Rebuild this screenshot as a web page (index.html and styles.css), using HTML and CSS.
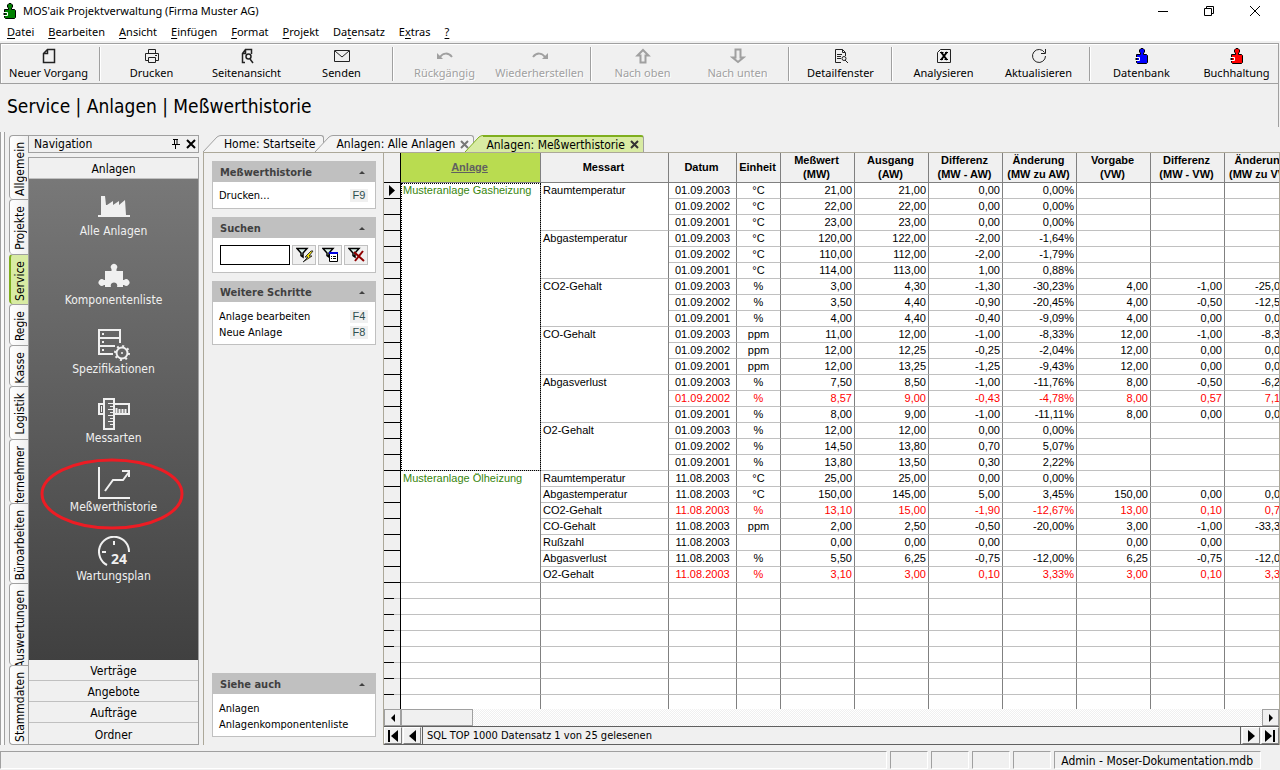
FILE: index.html
```html
<!DOCTYPE html>
<html lang="de">
<head>
    <meta charset="utf-8">
    <title>MOS'aik Projektverwaltung (Firma Muster AG)</title>
    <link rel="stylesheet" href="styles.css">
</head>
<body>
    <!-- shared puzzle piece, filled with the current colour -->
    <svg class="defs" aria-hidden="true">
        <symbol id="puzzle" viewBox="0 0 14 16">
            <path d="M1.500 6.500H5.500V5L4.500 4V2L6 .5H8L9.500 2V4L8.500 5V6.500H11.500L12.500 7.500V14.500L11.500 15.500H2.500L1.500 14.500Z" fill="currentColor" stroke="#000"/>
            <path d="M1 9.500H4.500V12.500H1" fill="none" stroke="#fff"/>
            <path d="M0 11H3" stroke="#000"/>
        </symbol>
    </svg>

    <header class="titlebar">
        <svg class="app-icon" width="14" height="16"><use href="#puzzle"/></svg>
        <span class="app-title">MOS'aik Projektverwaltung (Firma Muster AG)</span>
        <div class="window-buttons">
            <button aria-label="Minimieren"><svg width="12" height="12"><path d="M1 6.500H11" stroke="#000"/></svg></button>
            <button aria-label="Verkleinern"><svg width="12" height="12"><path d="M1.500 3.500H8.500V10.500H1.500ZM3.500 3V1.500H10.500V8.500H9" fill="none" stroke="#000"/></svg></button>
            <button aria-label="Schließen"><svg width="12" height="12"><path d="M1 1L11 11M11 1L1 11" stroke="#000"/></svg></button>
        </div>
    </header>

    <nav class="menubar">
        <button><u>D</u>atei</button>
        <button><u>B</u>earbeiten</button>
        <button><u>A</u>nsicht</button>
        <button><u>E</u>infügen</button>
        <button><u>F</u>ormat</button>
        <button><u>P</u>rojekt</button>
        <button>Da<u>t</u>ensatz</button>
        <button>E<u>x</u>tras</button>
        <button><u>?</u></button>
    </nav>

    <div class="toolbar">
        <button><svg width="16" height="16"><path d="M6.500 1.500H13.500V14.500H2.500V5.500ZM6.500 1.500V5.500H2.500" fill="none" stroke="#222" stroke-width="1.500"/></svg>Neuer Vorgang</button>
        <span class="sep"></span>
        <button><svg width="16" height="16"><path d="M4.500 5.500V1.500H11.500V5.500M4.500 12.500H1.500V5.500H14.500V12.500H11.500M4.500 9.500H11.500V14.500H4.500ZM11 7.500H13" fill="none" stroke="#222"/></svg>Drucken</button>
        <button><svg width="16" height="16"><path d="M6 14.500H3.500V5.500L6.500 1.500H12.500V6M6.500 2V5.500H4M11 11L14 15" fill="none" stroke="#222" stroke-width="1.500"/><circle cx="9.500" cy="8.500" r="2.500" fill="none" stroke="#222" stroke-width="1.500"/></svg>Seitenansicht</button>
        <button><svg width="16" height="16"><path d="M.5 2.500H15.500V13.500H.5ZM1 3L8 9L15 3" fill="none" stroke="#222"/></svg>Senden</button>
        <span class="sep"></span>
        <button disabled><svg width="18" height="16"><path d="M4 9C7 5 12 4 16 9" fill="none" stroke="#a0a0a0" stroke-width="2"/><path d="M1 5V11H7Z" fill="#a0a0a0"/></svg>Rückgängig</button>
        <button disabled><svg width="18" height="16"><path d="M2 9C6 4 11 5 14 9" fill="none" stroke="#a0a0a0" stroke-width="2"/><path d="M17 5V11H11Z" fill="#a0a0a0"/></svg>Wiederherstellen</button>
        <span class="sep"></span>
        <button disabled><svg width="16" height="16"><path d="M8 2L13.500 7.500H10.500V14.500H5.500V7.500H2.500Z" fill="#eee" stroke="#a0a0a0" stroke-width="2"/></svg>Nach oben</button>
        <button disabled><svg width="16" height="16"><path d="M8 14L13.500 9.500H10.500V1.500H5.500V9.500H2.500Z" fill="#eee" stroke="#a0a0a0" stroke-width="2"/></svg>Nach unten</button>
        <span class="sep"></span>
        <button><svg width="16" height="16"><path d="M8 14.500H2.500V1.500H9.500L12.500 4.500V8M9.500 1.500V4.500H12M4 6.500H9M4 8.500H8M4 10.500H8M12 12L15 15" fill="none" stroke="#222"/><circle cx="11" cy="10.500" r="2" fill="none" stroke="#222"/></svg>Detailfenster</button>
        <span class="sep"></span>
        <button><svg width="16" height="16"><path d="M4.500 1.500H14.500V14.500H1.500V4.500Z" fill="none" stroke="#222"/><path d="M5 4L11 12M11 4L5 12" stroke="#000" stroke-width="2"/><path d="M4 4.500H7.500M9 4.500H12M4 11.500H7M8.500 11.500H12" stroke="#000"/></svg>Analysieren</button>
        <button><svg width="16" height="16"><path d="M13.500 4.500A6.500 6.500 0 1 0 14.500 8M14.500 1V5.500H10" fill="none" stroke="#222"/></svg>Aktualisieren</button>
        <span class="sep"></span>
        <button><svg class="blue" width="14" height="16"><use href="#puzzle"/></svg>Datenbank</button>
        <button><svg class="red" width="14" height="16"><use href="#puzzle"/></svg>Buchhaltung</button>
    </div>

    <h1>Service | Anlagen | Meßwerthistorie</h1>

    <main>
        <div class="dock-edge"></div>

        <div class="side-tabs">
            <button><span>Allgemein</span></button>
            <button><span>Projekte</span></button>
            <button class="active"><span>Service</span></button>
            <button><span>Regie</span></button>
            <button><span>Kasse</span></button>
            <button><span>Logistik</span></button>
            <button><span>Unternehmer</span></button>
            <button><span>Büroarbeiten</span></button>
            <button><span>Auswertungen</span></button>
            <button><span>Stammdaten</span></button>
        </div>

        <aside class="navigation">
            <div class="nav-title">
                <span>Navigation</span>
                <button aria-label="Anheften"><svg width="10" height="10"><path d="M3.500 0V5.500M2 .5H7M6 0V5.500M1 5.500H9M4.500 5V10" fill="none" stroke="#000"/></svg></button>
                <button aria-label="Schließen"><svg width="10" height="10"><path d="M1 1L9 9M9 1L1 9" stroke="#000" stroke-width="2"/></svg></button>
            </div>
            <div class="nav-body">
                <button class="section">Anlagen</button>
                <div class="nav-items">
                    <a href="#"><svg width="32" height="32"><path d="M3 24V5H7L8 14H9L15 10V14L21 10V14L27 9L28 24Z" fill="#f0f0f0"/><path d="M0 25H32" stroke="#f0f0f0" stroke-width="2"/></svg>Alle Anlagen</a>
                    <a href="#"><svg width="32" height="32"><path d="M7 11H13.500V9A3.200 3.200 0 1 1 18.500 9V11H25V20H26A3.300 3.300 0 1 1 26 25H25V27H19C21 21 11 21 13 27H7V25H6A3.300 3.300 0 1 1 6 20H7Z" fill="#f0f0f0"/></svg>Komponentenliste</a>
                    <a href="#"><svg width="32" height="32"><path d="M22 14V1H1V25H15M1 9H22M1 17H17" fill="none" stroke="#f0f0f0" stroke-width="2"/><path d="M4 5H6M4 13H6M4 21H6" stroke="#f0f0f0" stroke-width="2"/><circle cx="24" cy="24" r="5.500" fill="none" stroke="#f0f0f0" stroke-width="2"/><circle cx="24" cy="24" r="7" fill="none" stroke="#f0f0f0" stroke-width="2" stroke-dasharray="2 3.500"/><circle cx="24" cy="24" r="1" fill="#f0f0f0"/></svg>Spezifikationen</a>
                    <a href="#"><svg width="32" height="32"><path d="M6 6H1V16H6M16 6H31V16H16M18.500 16V10M21.500 16V11M24.500 16V11M27.500 16V11" fill="none" stroke="#f0f0f0" stroke-width="2"/><path d="M6 1H16V31H6Z" fill="#666" stroke="#f0f0f0" stroke-width="2"/><path d="M10 5.500H15M12 8.500H15M10 11.500H15M12 14.500H15M10 17.500H15M12 20.500H15M10 23.500H15M12 26.500H15" stroke="#f0f0f0"/><path d="M3.500 8V14" stroke="#f0f0f0"/></svg>Messarten</a>
                    <a href="#"><svg width="32" height="32"><path d="M1 0V31H32M7 24L15 13H25L31 5M24 4H31V10" fill="none" stroke="#f0f0f0" stroke-width="2"/></svg>Meßwerthistorie
                        <svg class="marker" width="144" height="72"><ellipse cx="72" cy="36" rx="70" ry="34" fill="none" stroke="#ed1c24" stroke-width="3"/></svg></a>
                    <a href="#"><svg width="32" height="32"><path d="M9 29A15 15 0 1 1 31 16" fill="none" stroke="#f0f0f0" stroke-width="2"/><path d="M16 5V9M4 16H8" stroke="#f0f0f0" stroke-width="2"/><text x="13" y="28" class="icon-text">24</text></svg>Wartungsplan</a>
                </div>
                <button class="section">Verträge</button>
                <button class="section">Angebote</button>
                <button class="section">Aufträge</button>
                <button class="section">Ordner</button>
            </div>
        </aside>

        <section class="document">
            <div class="doc-tabs">
                <div class="doc-tab">
                    <svg width="18" height="17"><path d="M0 17L14 2Q16 .5 18 .5V17Z" fill="#f4f4f4"/><path d="M0 17L14 2Q16 .5 18 .5" fill="none" stroke="#a0a0a0"/></svg>
                    <button class="label">Home: Startseite</button>
                </div>
                <div class="doc-tab">
                    <svg width="18" height="17"><path d="M0 17L14 2Q16 .5 18 .5V17Z" fill="#f4f4f4"/><path d="M0 17L14 2Q16 .5 18 .5" fill="none" stroke="#a0a0a0"/></svg>
                    <button class="label">Anlagen: Alle Anlagen</button>
                    <button class="close" aria-label="Tab schließen"><svg width="9" height="9"><path d="M1 1L8 8M8 1L1 8" stroke="#777" stroke-width="2"/></svg></button>
                </div>
                <div class="doc-tab active">
                    <svg width="18" height="17"><path d="M0 17L14 2Q16 .5 18 .5V17Z" fill="#d8eba3"/><path d="M0 17L14 2Q16 .5 18 .5" fill="none" stroke="#7fae1e"/></svg>
                    <button class="label">Anlagen: Meßwerthistorie</button>
                    <button class="close" aria-label="Tab schließen"><svg width="9" height="9"><path d="M1 1L8 8M8 1L1 8" stroke="#333" stroke-width="2"/></svg></button>
                </div>
            </div>

            <div class="doc-body">
                <div class="tasks">
                    <section class="panel">
                        <h2>Meßwerthistorie <i></i></h2>
                        <div class="links"><a href="#">Drucken...<kbd>F9</kbd></a></div>
                    </section>
                    <section class="panel">
                        <h2>Suchen <i></i></h2>
                        <div class="search">
                            <input type="text" aria-label="Suchen">
                            <button aria-label="Filter anwenden"><svg width="18" height="16"><path d="M1 1.500H11L7 6V10L5 8.500V6Z" fill="#d8efe8" stroke="#000" stroke-width="1.500"/><path d="M15 4L9 10H12L7 15L16 9H13L17 4Z" fill="#ffee00" stroke="#333"/></svg></button>
                            <button aria-label="Filter bearbeiten"><svg width="18" height="16"><path d="M1 1.500H11L7 6V10L5 8.500V6Z" fill="#d8efe8" stroke="#000" stroke-width="1.500"/><path d="M7.500 5.500H15.500V14.500H7.500Z" fill="#fff" stroke="#000"/><path d="M7 6H16" stroke="#0000e0" stroke-width="2"/><path d="M9 9.500H10M11 9.500H14M9 11.500H10M11 11.500H14" stroke="#000"/></svg></button>
                            <button aria-label="Filter entfernen"><svg width="18" height="16"><path d="M1 1.500H11L7 6V10L5 8.500V6Z" fill="#d8efe8" stroke="#000" stroke-width="1.500"/><path d="M6 5L16 14M15 4L7 14" stroke="#900000" stroke-width="2"/></svg></button>
                        </div>
                    </section>
                    <section class="panel">
                        <h2>Weitere Schritte <i></i></h2>
                        <div class="links">
                            <a href="#">Anlage bearbeiten<kbd>F4</kbd></a>
                            <a href="#">Neue Anlage<kbd>F8</kbd></a>
                        </div>
                    </section>
                    <section class="panel last">
                        <h2>Siehe auch <i></i></h2>
                        <div class="links">
                            <a href="#">Anlagen</a>
                            <a href="#">Anlagenkomponentenliste</a>
                        </div>
                    </section>
                </div>

                <div class="grid">
                    <div class="grid-view">
                        <table>
                            <colgroup>
                                <col class="c-select"><col class="c-anlage"><col class="c-messart"><col class="c-datum"><col class="c-einheit">
                                <col class="c-wert" span="7">
                            </colgroup>
                            <thead>
                                <tr><th class="sel"></th><th class="sorted">Anlage</th><th>Messart</th><th>Datum</th><th>Einheit</th><th>Meßwert<br>(MW)</th><th>Ausgang<br>(AW)</th><th>Differenz<br>(MW - AW)</th><th>Änderung<br>(MW zu AW)</th><th>Vorgabe<br>(VW)</th><th>Differenz<br>(MW - VW)</th><th>Änderung<br>(MW zu VW)</th></tr>
                            </thead>
                            <tbody>
                                <tr><td class="sel"><svg width="6" height="11"><path d="M0 0L6 5.500L0 11Z"/></svg></td><td class="anlage current" rowspan="18">Musteranlage Gasheizung</td><td class="art" rowspan="3">Raumtemperatur</td><td class="mid">01.09.2003</td><td class="mid">°C</td><td>21,00</td><td>21,00</td><td>0,00</td><td>0,00%</td><td></td><td></td><td></td></tr>
                                <tr><td class="sel"></td><td class="mid">01.09.2002</td><td class="mid">°C</td><td>22,00</td><td>22,00</td><td>0,00</td><td>0,00%</td><td></td><td></td><td></td></tr>
                                <tr><td class="sel"></td><td class="mid">01.09.2001</td><td class="mid">°C</td><td>23,00</td><td>23,00</td><td>0,00</td><td>0,00%</td><td></td><td></td><td></td></tr>
                                <tr><td class="sel"></td><td class="art" rowspan="3">Abgastemperatur</td><td class="mid">01.09.2003</td><td class="mid">°C</td><td>120,00</td><td>122,00</td><td>-2,00</td><td>-1,64%</td><td></td><td></td><td></td></tr>
                                <tr><td class="sel"></td><td class="mid">01.09.2002</td><td class="mid">°C</td><td>110,00</td><td>112,00</td><td>-2,00</td><td>-1,79%</td><td></td><td></td><td></td></tr>
                                <tr><td class="sel"></td><td class="mid">01.09.2001</td><td class="mid">°C</td><td>114,00</td><td>113,00</td><td>1,00</td><td>0,88%</td><td></td><td></td><td></td></tr>
                                <tr><td class="sel"></td><td class="art" rowspan="3">CO2-Gehalt</td><td class="mid">01.09.2003</td><td class="mid">%</td><td>3,00</td><td>4,30</td><td>-1,30</td><td>-30,23%</td><td>4,00</td><td>-1,00</td><td>-25,00%</td></tr>
                                <tr><td class="sel"></td><td class="mid">01.09.2002</td><td class="mid">%</td><td>3,50</td><td>4,40</td><td>-0,90</td><td>-20,45%</td><td>4,00</td><td>-0,50</td><td>-12,50%</td></tr>
                                <tr><td class="sel"></td><td class="mid">01.09.2001</td><td class="mid">%</td><td>4,00</td><td>4,40</td><td>-0,40</td><td>-9,09%</td><td>4,00</td><td>0,00</td><td>0,00%</td></tr>
                                <tr><td class="sel"></td><td class="art" rowspan="3">CO-Gehalt</td><td class="mid">01.09.2003</td><td class="mid">ppm</td><td>11,00</td><td>12,00</td><td>-1,00</td><td>-8,33%</td><td>12,00</td><td>-1,00</td><td>-8,33%</td></tr>
                                <tr><td class="sel"></td><td class="mid">01.09.2002</td><td class="mid">ppm</td><td>12,00</td><td>12,25</td><td>-0,25</td><td>-2,04%</td><td>12,00</td><td>0,00</td><td>0,00%</td></tr>
                                <tr><td class="sel"></td><td class="mid">01.09.2001</td><td class="mid">ppm</td><td>12,00</td><td>13,25</td><td>-1,25</td><td>-9,43%</td><td>12,00</td><td>0,00</td><td>0,00%</td></tr>
                                <tr><td class="sel"></td><td class="art" rowspan="3">Abgasverlust</td><td class="mid">01.09.2003</td><td class="mid">%</td><td>7,50</td><td>8,50</td><td>-1,00</td><td>-11,76%</td><td>8,00</td><td>-0,50</td><td>-6,25%</td></tr>
                                <tr class="alert"><td class="sel"></td><td class="mid">01.09.2002</td><td class="mid">%</td><td>8,57</td><td>9,00</td><td>-0,43</td><td>-4,78%</td><td>8,00</td><td>0,57</td><td>7,13%</td></tr>
                                <tr><td class="sel"></td><td class="mid">01.09.2001</td><td class="mid">%</td><td>8,00</td><td>9,00</td><td>-1,00</td><td>-11,11%</td><td>8,00</td><td>0,00</td><td>0,00%</td></tr>
                                <tr><td class="sel"></td><td class="art" rowspan="3">O2-Gehalt</td><td class="mid">01.09.2003</td><td class="mid">%</td><td>12,00</td><td>12,00</td><td>0,00</td><td>0,00%</td><td></td><td></td><td></td></tr>
                                <tr><td class="sel"></td><td class="mid">01.09.2002</td><td class="mid">%</td><td>14,50</td><td>13,80</td><td>0,70</td><td>5,07%</td><td></td><td></td><td></td></tr>
                                <tr><td class="sel"></td><td class="mid">01.09.2001</td><td class="mid">%</td><td>13,80</td><td>13,50</td><td>0,30</td><td>2,22%</td><td></td><td></td><td></td></tr>
                                <tr><td class="sel"></td><td class="anlage" rowspan="7">Musteranlage Ölheizung</td><td class="art">Raumtemperatur</td><td class="mid">11.08.2003</td><td class="mid">°C</td><td>25,00</td><td>25,00</td><td>0,00</td><td>0,00%</td><td></td><td></td><td></td></tr>
                                <tr><td class="sel"></td><td class="art">Abgastemperatur</td><td class="mid">11.08.2003</td><td class="mid">°C</td><td>150,00</td><td>145,00</td><td>5,00</td><td>3,45%</td><td>150,00</td><td>0,00</td><td>0,00%</td></tr>
                                <tr class="alert"><td class="sel"></td><td class="art">CO2-Gehalt</td><td class="mid">11.08.2003</td><td class="mid">%</td><td>13,10</td><td>15,00</td><td>-1,90</td><td>-12,67%</td><td>13,00</td><td>0,10</td><td>0,77%</td></tr>
                                <tr><td class="sel"></td><td class="art">CO-Gehalt</td><td class="mid">11.08.2003</td><td class="mid">ppm</td><td>2,00</td><td>2,50</td><td>-0,50</td><td>-20,00%</td><td>3,00</td><td>-1,00</td><td>-33,33%</td></tr>
                                <tr><td class="sel"></td><td class="art">Rußzahl</td><td class="mid">11.08.2003</td><td class="mid"></td><td>0,00</td><td>0,00</td><td>0,00</td><td></td><td>0,00</td><td>0,00</td><td></td></tr>
                                <tr><td class="sel"></td><td class="art">Abgasverlust</td><td class="mid">11.08.2003</td><td class="mid">%</td><td>5,50</td><td>6,25</td><td>-0,75</td><td>-12,00%</td><td>6,25</td><td>-0,75</td><td>-12,00%</td></tr>
                                <tr class="alert"><td class="sel"></td><td class="art">O2-Gehalt</td><td class="mid">11.08.2003</td><td class="mid">%</td><td>3,10</td><td>3,00</td><td>0,10</td><td>3,33%</td><td>3,00</td><td>0,10</td><td>3,33%</td></tr>
                            </tbody>
                            <tbody class="empty">
                                <tr><td class="sel"></td><td></td><td></td><td></td><td></td><td></td><td></td><td></td><td></td><td></td><td></td><td></td></tr>
                                <tr><td class="sel"></td><td></td><td></td><td></td><td></td><td></td><td></td><td></td><td></td><td></td><td></td><td></td></tr>
                                <tr><td class="sel"></td><td></td><td></td><td></td><td></td><td></td><td></td><td></td><td></td><td></td><td></td><td></td></tr>
                                <tr><td class="sel"></td><td></td><td></td><td></td><td></td><td></td><td></td><td></td><td></td><td></td><td></td><td></td></tr>
                                <tr><td class="sel"></td><td></td><td></td><td></td><td></td><td></td><td></td><td></td><td></td><td></td><td></td><td></td></tr>
                                <tr><td class="sel"></td><td></td><td></td><td></td><td></td><td></td><td></td><td></td><td></td><td></td><td></td><td></td></tr>
                                <tr><td class="sel"></td><td></td><td></td><td></td><td></td><td></td><td></td><td></td><td></td><td></td><td></td><td></td></tr>
                                <tr><td class="sel"></td><td></td><td></td><td></td><td></td><td></td><td></td><td></td><td></td><td></td><td></td><td></td></tr>
                            </tbody>
                        </table>
                    </div>
                    <div class="scrollbar">
                        <button aria-label="Nach links"><svg width="4" height="8"><path d="M4 0V8L0 4Z"/></svg></button>
                        <div class="thumb"></div>
                        <button class="right" aria-label="Nach rechts"><svg width="4" height="8"><path d="M0 0V8L4 4Z"/></svg></button>
                    </div>
                    <div class="record-nav">
                        <button aria-label="Erster Datensatz"><svg width="10" height="12"><path d="M1 0V12" stroke="#000" stroke-width="2"/><path d="M10 0V12L3 6Z"/></svg></button>
                        <button aria-label="Voriger Datensatz"><svg width="7" height="12"><path d="M7 0V12L0 6Z"/></svg></button>
                        <span class="record-info">SQL TOP 1000 Datensatz 1 von 25 gelesenen</span>
                        <button aria-label="Nächster Datensatz"><svg width="7" height="12"><path d="M0 0V12L7 6Z"/></svg></button>
                        <button aria-label="Letzter Datensatz"><svg width="10" height="12"><path d="M9 0V12" stroke="#000" stroke-width="2"/><path d="M0 0V12L7 6Z"/></svg></button>
                    </div>
                </div>
            </div>
        </section>
    </main>

    <footer class="statusbar">
        <span class="wide"></span>
        <span></span>
        <span></span>
        <span></span>
        <span></span>
        <span class="db">Admin - Moser-Dokumentation.mdb</span>
    </footer>
</body>
</html>
```
FILE: styles.css
```css
* {
    box-sizing: border-box;
}
body {
    margin: 0;
    height: 100vh;
    display: flex;
    flex-direction: column;
    overflow: hidden;
    background-color: #f0f0f0;
    color: #000;
    font-family: "DejaVu Sans Condensed", "DejaVu Sans", sans-serif;
    font-size: 12px;
    line-height: 16px;
}
button {
    margin: 0;
    padding: 0;
    border: 0;
    background: none;
    color: inherit;
    font: inherit;
}
a {
    color: inherit;
    text-decoration: none;
}
svg {
    display: block;
    flex: none;
}
.defs {
    position: absolute;
    width: 0;
    height: 0;
}

/* title and menu */
.titlebar,
.menubar,
.toolbar {
    display: flex;
    font-family: "Noto Sans", sans-serif;
    font-size: 11px;
}
.titlebar {
    align-items: center;
    height: 23px;
    padding: 0 19px 1px 3px;
    background-color: #fff;
}
.app-icon {
    color: #008000;
}
.app-title {
    flex: 1;
    padding-left: 6px;
}
.window-buttons {
    display: flex;
    gap: 34px;
}
.menubar {
    gap: 14px;
    height: 18px;
    padding: 0 7px;
    background-color: #fff;
}
.menubar button {
    line-height: 18px;
}
.menubar u {
    text-underline-offset: 2px;
}

/* toolbar */
.toolbar {
    height: 41px;
    margin: 2px 1px 0 0;
    padding: 3px 0 0;
    border: 1px solid #a0a0a0;
    box-shadow: inset 1px 1px 0 #fff;
    overflow: hidden;
}
.toolbar button {
    flex: 0 0 95px;
    display: flex;
    flex-direction: column;
    align-items: center;
    justify-content: flex-start;
    gap: 1px;
    padding-top: 1px;
    white-space: nowrap;
}
.toolbar button:disabled {
    color: #a0a0a0;
    text-shadow: 1px 1px 0 #fff;
}
.toolbar .sep {
    flex: 0 0 8px;
    height: 34px;
    background: linear-gradient(to right, transparent 3px, #a0a0a0 3px, #a0a0a0 4px, #fff 4px, #fff 5px, transparent 5px);
}
.blue {
    color: #0000ff;
}
.red {
    color: #ff0000;
}
h1 {
    height: 43px;
    margin: 0 1px 5px 0;
    padding: 0 7px;
    border-right: 1px solid #a0a0a0;
    font-size: 19px;
    font-weight: normal;
    line-height: 44px;
}

/* main area */
main {
    flex: 1;
    display: flex;
    min-height: 0;
    padding-top: 3px;
}
.dock-edge {
    width: 5px;
    margin: -3px 4px 0 0;
    border-left: 1px solid #a0a0a0;
    border-right: 1px solid #a0a0a0;
    background-color: #fafafa;
}
.side-tabs {
    display: grid;
    grid-template-rows: 64px 55px 50px 41px 41px 53px 64px 80px 82px 1fr;
    width: 19px;
}
.side-tabs button {
    display: flex;
    align-items: flex-start;
    justify-content: flex-end;
    min-height: 0;
    padding-top: 6px;
    border: 1px solid #a0a0a0;
    border-width: 1px 0 0 1px;
    border-radius: 4px 0 0 4px;
    background: linear-gradient(to right, #fff, #f0f0f0);
    overflow: hidden;
}
.side-tabs button:last-child {
    border-bottom-width: 1px;
}
.side-tabs .active {
    border-left: 2px solid #7fae1e;
    background: #d8eba3;
}
.side-tabs span {
    writing-mode: vertical-rl;
    transform: rotate(180deg);
    white-space: nowrap;
}
.navigation {
    display: flex;
    flex-direction: column;
    gap: 4px;
    width: 171px;
}
.nav-title {
    display: flex;
    align-items: center;
    gap: 5px;
    height: 18px;
    padding: 0 2px 0 5px;
    border: 1px solid #a0a0a0;
}
.nav-title span {
    flex: 1;
}
.nav-body {
    flex: 1;
    display: flex;
    flex-direction: column;
    border: 1px solid #a0a0a0;
}
.section {
    height: 21px;
    padding-top: 2px;
    border-bottom: 1px solid #c0c0c0;
}
.section:last-child {
    border-bottom: 0;
}
.nav-items {
    flex: 1;
    display: flex;
    flex-direction: column;
    gap: 21px;
    padding-top: 12px;
    background: linear-gradient(#787878, #404040);
    color: #f0f0f0;
}
.nav-items a {
    position: relative;
    display: flex;
    flex-direction: column;
    align-items: center;
}
.icon-text {
    fill: #f0f0f0;
    font: bold 14px "Open Sans", sans-serif;
}
.marker {
    position: absolute;
    top: -9px;
    left: 11px;
}

/* document tabs */
.document {
    flex: 1;
    display: flex;
    flex-direction: column;
    min-width: 0;
    margin-left: 4px;
}
.doc-tabs {
    display: flex;
    height: 17px;
}
.doc-tab {
    display: flex;
}
.doc-tab + .doc-tab {
    margin-left: -9px;
}
.doc-tab .label {
    padding: 0 5px 0 3px;
    border-top: 1px solid #a0a0a0;
    background-color: #f4f4f4;
}
.doc-tab .label:last-child,
.doc-tab .close {
    border-right: 1px solid #a0a0a0;
    border-top-right-radius: 3px;
}
.doc-tab .label:last-child {
    padding-right: 8px;
}
.doc-tab .close {
    padding: 0 4px 0 0;
    border-top: 1px solid #a0a0a0;
    background-color: #f4f4f4;
}
.doc-tab.active .label,
.doc-tab.active .close {
    border-top: 2px solid #7fae1e;
    background-color: #d8eba3;
    line-height: 14px;
}
.doc-body {
    flex: 1;
    display: flex;
    min-height: 0;
    border: 1px solid #aca899;
    border-bottom: 0;
}

/* task panels */
.tasks {
    display: flex;
    flex-direction: column;
    gap: 8px;
    width: 179px;
    padding: 8px 7px 8px 8px;
    font-size: 11px;
}
.panel {
    border: 1px solid #c0c0c0;
    background-color: #fff;
}
.panel.last {
    margin-top: auto;
}
.panel h2 {
    display: flex;
    align-items: center;
    justify-content: space-between;
    height: 20px;
    margin: 0;
    padding: 1px 10px 0 7px;
    background-color: #c0c0c0;
    color: #404040;
    font-size: 11px;
}
.panel h2 i {
    border: 3px solid transparent;
    border-top: 0;
    border-bottom-color: #404040;
}
.links {
    padding: 6px 7px 4px 6px;
}
.panel:not(:first-child) .links {
    padding: 7px 7px 3px 6px;
}
.links a {
    display: flex;
    justify-content: space-between;
    height: 16px;
}
.links kbd {
    width: 18px;
    height: 13px;
    margin-top: 1px;
    background-color: #f0f0f0;
    color: #2f4f4f;
    font: 11px/13px "Liberation Sans", Arial, sans-serif;
    text-align: center;
}
.search {
    display: flex;
    gap: 2px;
    padding: 7px;
}
.search input {
    flex: 1;
    min-width: 0;
    height: 20px;
    border: 1px solid #000;
    border-radius: 0;
}
.search button {
    width: 24px;
    height: 20px;
    padding: 1px 3px;
    border: 1px solid #c0c0c0;
    background-color: #f0f0f0;
}

/* data grid */
.grid {
    flex: 1;
    display: flex;
    flex-direction: column;
    min-width: 0;
    border-left: 1px solid #aca899;
}
.grid-view {
    flex: 1;
    min-height: 0;
    overflow: hidden;
    background-color: #fff;
}
table {
    width: 915px;
    table-layout: fixed;
    border-spacing: 0;
    font: 11px/15px "Liberation Sans", Arial, sans-serif;
}
.c-select { width: 17px; }
.c-anlage { width: 140px; }
.c-messart { width: 128px; }
.c-datum { width: 68px; }
.c-einheit { width: 44px; }
.c-wert { width: 74px; }
th {
    height: 30px;
    padding: 0 2px 1px 0;
    border-right: 1px solid #808080;
    border-bottom: 1px solid #808080;
    background-color: #f0f0f0;
    line-height: 14px;
    white-space: nowrap;
}
th.sorted {
    background-color: #b9dc50;
    color: #606060;
    text-decoration: underline;
}
td {
    height: 16px;
    padding: 0 2px;
    border-right: 1px solid #808080;
    border-bottom: 1px solid #c0c0c0;
    text-align: right;
    vertical-align: top;
    white-space: nowrap;
}
td.mid {
    text-align: center;
}
td.art,
td.anlage {
    text-align: left;
}
td.anlage {
    color: #38850d;
}
td.current {
    outline: 1px dotted #000;
    outline-offset: -1px;
}
.alert td {
    color: #ff0000;
}
.alert .art {
    color: #000;
}
.sel,
.alert .sel {
    padding: 2px 0 0 5px;
    border-color: #000;
    background-color: #f0f0f0;
}
.empty .sel {
    border-bottom: 0;
    background: linear-gradient(to right, #000 10px, #c0c0c0 10px) bottom / 100% 1px no-repeat #f0f0f0;
}
.scrollbar {
    display: flex;
    height: 17px;
    background: repeating-conic-gradient(#fff 0 25%, #f0f0f0 0 50%) 0 0 / 2px 2px;
}
.scrollbar button,
.thumb {
    display: flex;
    align-items: center;
    justify-content: center;
    width: 17px;
    border: 1px solid #a0a0a0;
    background-color: #f0f0f0;
}
.thumb {
    width: 72px;
}
.scrollbar .right {
    margin-left: auto;
}
.record-nav {
    display: flex;
    gap: 1px;
    height: 19px;
    border-top: 1px solid #606060;
    border-bottom: 1px solid #606060;
    font-size: 11px;
}
.record-nav button {
    display: flex;
    align-items: center;
    justify-content: center;
    width: 18px;
    border: 1px solid #fff;
    border-right-color: #808080;
    border-bottom-color: #808080;
}
.record-info {
    flex: 1;
    padding-left: 4px;
    border-left: 1px solid #606060;
    border-right: 1px solid #606060;
    line-height: 18px;
}

/* status bar */
.statusbar {
    display: flex;
    gap: 3px;
    height: 19px;
    margin-top: 6px;
    padding-right: 19px;
}
.statusbar span {
    width: 38px;
    height: 18px;
    border: 1px solid #fff;
    border-top-color: #a0a0a0;
    border-left-color: #a0a0a0;
}
.statusbar .wide {
    flex: 1;
}
.statusbar .db {
    width: auto;
    padding: 0 7px 0 6px;
    line-height: 18px;
}
```
